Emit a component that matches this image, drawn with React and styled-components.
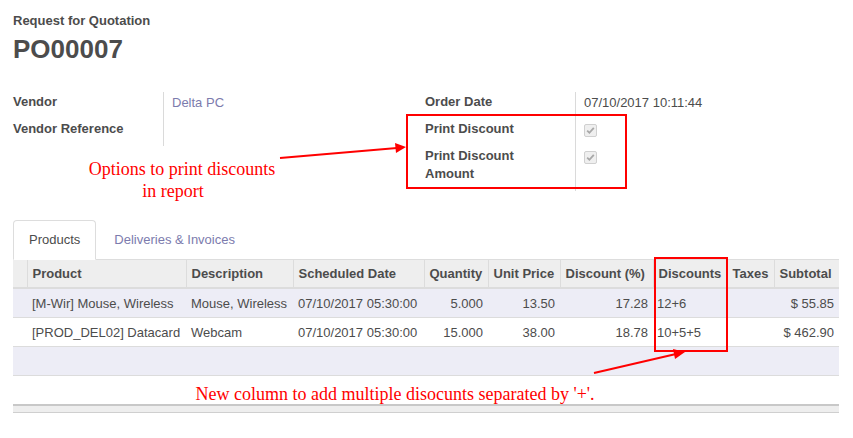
import React from 'react';
import styled, { createGlobalStyle } from 'styled-components';

const GlobalStyle = createGlobalStyle`
  html, body {
    margin: 0;
    padding: 0;
    background: #fff;
  }
  body {
    font-family: "Liberation Sans", Arial, sans-serif;
    font-size: 13px;
    color: #4c4c4c;
  }
`;

const Page = styled.div`
  position: relative;
  width: 853px;
  height: 438px;
  overflow: hidden;
`;

const Sheet = styled.div`
  padding: 12px 14px 0 13px;
  width: 826px;
`;

const TitleLabel = styled.div`
  font-weight: bold;
  line-height: 18px;
`;

const Title = styled.h1`
  margin: 4px 0 0;
  font-size: 26px;
  line-height: 30px;
  font-weight: bold;
`;

const Groups = styled.div`
  display: grid;
  grid-template-columns: 412px 414px;
  margin-top: 28px;
`;

const FieldTable = styled.div`
  display: grid;
  grid-template-columns: 150px 1fr;
  align-content: start;
`;

const Label = styled.div`
  font-weight: bold;
  line-height: 18px;
  padding: 1px 20px 8px 0;
`;

const Value = styled.div`
  border-left: 1px solid #dadada;
  padding: 2px 0 7px 8px;
  line-height: 18px;
  color: ${p => (p.link ? '#7c7bad' : '#4c4c4c')};
`;

const Check = styled.span`
  display: block;
  width: 11px;
  height: 11px;
  margin-top: 3px;
  border: 1px solid #d0d0d0;
  border-radius: 2px;
  background: #efefef;
  position: relative;
  svg {
    position: absolute;
    left: 1px;
    top: 1px;
  }
`;

const Tabs = styled.div`
  display: flex;
  margin-top: 29px;
  border-bottom: 1px solid #ddd;
`;

const Tab = styled.div`
  padding: 9px 15px;
  line-height: 20px;
  margin-right: 2px;
  margin-bottom: -1px;
  border: 1px solid ${p => (p.active ? '#ddd' : 'transparent')};
  border-bottom-color: ${p => (p.active ? '#fff' : 'transparent')};
  border-radius: 4px 4px 0 0;
  background: ${p => (p.active ? '#fff' : 'transparent')};
  color: ${p => (p.active ? '#4c4c4c' : '#7c7bad')};
`;

const Grid = styled.table`
  width: 826px;
  table-layout: fixed;
  border-collapse: collapse;
  border-spacing: 0;
`;

const Th = styled.th`
  background: #eee;
  font-weight: bold;
  text-align: left;
  height: 27px;
  padding: 0 5px;
  border-left: 1px solid #dcdcdc;
  border-bottom: 2px solid #dcdcdc;
  white-space: nowrap;
  overflow: hidden;
  &:first-child {
    border-left: none;
  }
`;

const Row = styled.tr`
  background: ${p => (p.striped ? '#ededf6' : '#fff')};
  border-bottom: 1px solid #dcdcdc;
`;

const Td = styled.td`
  height: 28px;
  padding: 0 ${p => (p.right ? '5px' : '4px')} 0 ${p => (p.tight ? '4px' : '5px')};
  text-align: ${p => (p.right ? 'right' : 'left')};
  white-space: nowrap;
  overflow: hidden;
`;

const Foot = styled.td`
  height: 6px;
  padding: 0;
  background: #eee;
  border-top: 2px solid #c8c8c8;
  border-bottom: 1px solid #cfcfcf;
`;

const RedBox = styled.div`
  position: absolute;
  border: 2px solid #f00;
  left: ${p => p.x}px;
  top: ${p => p.y}px;
  width: ${p => p.w}px;
  height: ${p => p.h}px;
  box-sizing: border-box;
  pointer-events: none;
`;

const Note = styled.div`
  position: absolute;
  left: ${p => p.x}px;
  top: ${p => p.y}px;
  width: ${p => p.w}px;
  text-align: center;
  font-family: "Liberation Serif", "Times New Roman", serif;
  font-size: 18px;
  line-height: 22px;
  color: #f00;
  white-space: nowrap;
`;

const NoteLine = styled.span`
  display: inline-block;
  padding-right: ${p => p.shift || 0}px;
`;

const Arrows = styled.svg`
  position: absolute;
  left: 0;
  top: 0;
  pointer-events: none;
`;

const CheckMark = () => (
  <Check>
    <svg width="9" height="9" viewBox="0 0 9 9">
      <path d="M1.2 4.6 L3.4 6.8 L7.8 1.8" fill="none" stroke="#a8a8a8" strokeWidth="1.8" />
    </svg>
  </Check>
);

const columns = [
  { key: 'handle', label: '', width: 14 },
  { key: 'product', label: 'Product', width: 159 },
  { key: 'desc', label: 'Description', width: 107 },
  { key: 'date', label: 'Scheduled Date', width: 131 },
  { key: 'qty', label: 'Quantity', width: 64 },
  { key: 'price', label: 'Unit Price', width: 72 },
  { key: 'disc', label: 'Discount (%)', width: 93 },
  { key: 'discs', label: 'Discounts', width: 74 },
  { key: 'taxes', label: 'Taxes', width: 47 },
  { key: 'subtotal', label: 'Subtotal', width: 65 },
];

const lines = [
  {
    product: '[M-Wir] Mouse, Wireless',
    desc: 'Mouse, Wireless',
    date: '07/10/2017 05:30:00',
    qty: '5.000',
    price: '13.50',
    disc: '17.28',
    discs: '12+6',
    subtotal: '$ 55.85',
  },
  {
    product: '[PROD_DEL02] Datacard',
    desc: 'Webcam',
    date: '07/10/2017 05:30:00',
    qty: '15.000',
    price: '38.00',
    disc: '18.78',
    discs: '10+5+5',
    subtotal: '$ 462.90',
  },
];

const App = () => (
  <Page>
    <GlobalStyle />
    <Sheet>
      <TitleLabel>Request for Quotation</TitleLabel>
      <Title>PO00007</Title>

      <Groups>
        <FieldTable>
          <Label>Vendor</Label>
          <Value link>Delta PC</Value>
          <Label>Vendor Reference</Label>
          <Value />
        </FieldTable>
        <FieldTable>
          <Label>Order Date</Label>
          <Value>07/10/2017 10:11:44</Value>
          <Label>Print Discount</Label>
          <Value><CheckMark /></Value>
          <Label>Print Discount Amount</Label>
          <Value><CheckMark /></Value>
        </FieldTable>
      </Groups>

      <Tabs>
        <Tab active>Products</Tab>
        <Tab>Deliveries &amp; Invoices</Tab>
      </Tabs>

      <Grid>
        <colgroup>
          {columns.map(c => <col key={c.key} style={{ width: c.width }} />)}
        </colgroup>
        <thead>
          <tr>
            {columns.map(c => <Th key={c.key}>{c.label}</Th>)}
          </tr>
        </thead>
        <tbody>
          {lines.map((l, i) => (
            <Row key={l.product} striped={i % 2 === 0}>
              <Td />
              <Td>{l.product}</Td>
              <Td>{l.desc}</Td>
              <Td>{l.date}</Td>
              <Td right>{l.qty}</Td>
              <Td right>{l.price}</Td>
              <Td right>{l.disc}</Td>
              <Td tight>{l.discs}</Td>
              <Td />
              <Td right>{l.subtotal}</Td>
            </Row>
          ))}
          <Row striped><Td colSpan={10} /></Row>
          <Row><Td colSpan={10} /></Row>
        </tbody>
        <tfoot>
          <tr><Foot colSpan={10} /></tr>
        </tfoot>
      </Grid>
    </Sheet>

    <RedBox x={406} y={114} w={221} h={75} />
    <RedBox x={654} y={257} w={74} h={95} />

    <Note x={60} y={158} w={244}>
      Options to print discounts<br />
      <NoteLine shift={18}>in report</NoteLine>
    </Note>
    <Note x={150} y={383} w={490}>New column to add multiple disocunts separated by '+'.</Note>

    <Arrows width="853" height="438">
      <g stroke="#f00" strokeWidth="2" fill="#f00">
        <line x1="280" y1="158" x2="397" y2="148" />
        <polygon points="406,147 395,143 396,153" stroke="none" />
        <line x1="594" y1="373" x2="676" y2="354" />
        <polygon points="685,352 673,349 675,359" stroke="none" />
      </g>
    </Arrows>
  </Page>
);

export default App;
